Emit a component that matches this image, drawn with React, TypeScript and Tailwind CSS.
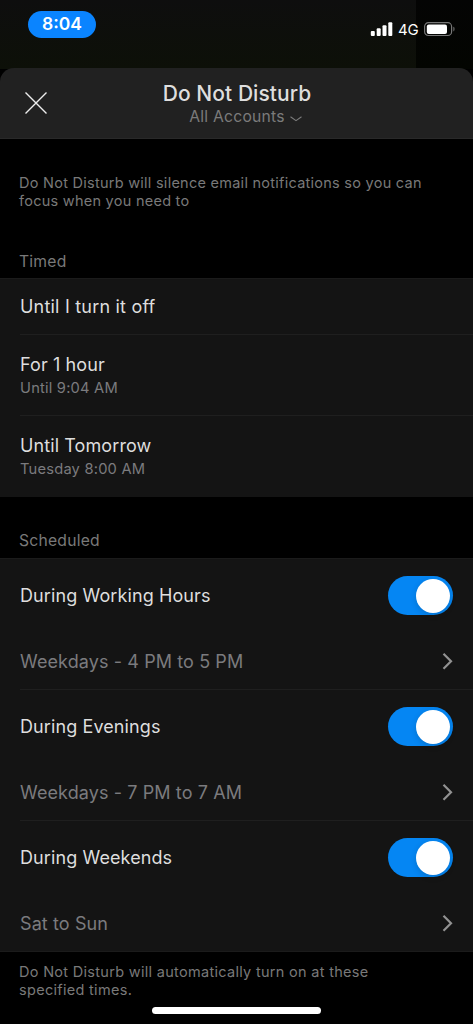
import { useState } from 'react';

const timed = [
  { title: 'Until I turn it off', detail: '' },
  { title: 'For 1 hour', detail: 'Until 9:04 AM' },
  { title: 'Until Tomorrow', detail: 'Tuesday 8:00 AM' },
];

const scheduled = [
  { title: 'During Working Hours', when: 'Weekdays - 4 PM to 5 PM' },
  { title: 'During Evenings', when: 'Weekdays - 7 PM to 7 AM' },
  { title: 'During Weekends', when: 'Sat to Sun' },
];

function StatusBar() {
  return (
    <div className="flex h-[69px] bg-linear-to-b from-[#0e0e0e] to-[#0d1008]">
      <div className="flex-1 pl-7 pt-[11px]">
        <div className="flex h-[27px] w-[68px] items-center justify-center rounded-full bg-[#0a84ff] text-[17.5px] font-semibold text-white">
          8:04
        </div>
      </div>
      <div className="w-[57px] bg-linear-to-b from-[#040404] to-[#030501]" />
      <div className="-ml-[103px] flex w-[103px] items-start pt-[21px]">
        <svg width="24" height="16" viewBox="0 0 24 16" fill="#fff">
          <rect x="0.8" y="10" width="4" height="5" rx="1" />
          <rect x="6.7" y="7.3" width="4" height="7.7" rx="1" />
          <rect x="12.5" y="4.3" width="4" height="10.7" rx="1" />
          <rect x="18.3" y="1.2" width="4" height="13.8" rx="1" />
        </svg>
        <span className="ml-1 w-[21px] text-[15px] leading-[17px] tracking-[-0.1px] text-white">4G</span>
        <svg className="ml-[5px]" width="32" height="16" viewBox="0 0 32 16">
          <rect x="0.6" y="1.7" width="27" height="12.8" rx="3.8" fill="none" stroke="#777" strokeWidth="1.2" />
          <rect x="2.8" y="3.5" width="20.2" height="9.4" rx="2" fill="#fff" />
          <path d="M29.4 5.8c1.5.5 1.5 4.1 0 4.6z" fill="#777" />
        </svg>
      </div>
    </div>
  );
}

function Toggle({ on, onChange }: { on: boolean; onChange: () => void }) {
  return (
    <button
      role="switch"
      aria-checked={on}
      onClick={onChange}
      className={`flex h-[39px] w-[65px] items-center rounded-full px-[3px] transition-colors ${
        on ? 'justify-end bg-[#0586f3]' : 'justify-start bg-[#39393d]'
      }`}
    >
      <span className="size-[34px] rounded-full bg-white shadow-[0_2px_6px_rgba(0,0,0,0.15)]" />
    </button>
  );
}

export default function App() {
  const [enabled, setEnabled] = useState([true, true, true]);

  const toggle = (index: number) => setEnabled(enabled.map((on, i) => (i === index ? !on : on)));

  return (
    <div className="flex h-[1024px] w-[473px] flex-col overflow-hidden bg-black font-['Inter',sans-serif] text-[#dedede]">
      <StatusBar />

      <header className="-mt-px grid h-[71px] shrink-0 grid-cols-[60px_1fr_60px] rounded-t-[14px] border-b border-[#292929] bg-[#212121]">
        <button className="flex items-center pl-[25px]" aria-label="Close">
          <svg width="22" height="22" viewBox="0 0 22 22" fill="none" stroke="#ededed" strokeWidth="1.4">
            <path d="M.5.5l21 21M21.5.5l-21 21" />
          </svg>
        </button>
        <div className="flex flex-col items-center pt-3">
          <h1 className="pl-px text-[21px] leading-7 font-medium tracking-[0.05px] whitespace-nowrap">Do Not Disturb</h1>
          <div className="flex items-center pl-[18px] text-[15.7px] leading-[18px] tracking-[0.22px] text-[#7b7b7b]">
            <span>All Accounts</span>
            <svg className="mt-1 ml-[5px]" width="12" height="6" viewBox="0 0 12 6" fill="none" stroke="#7b7b7b" strokeWidth="1.1">
              <path d="M.5.8L6 4.7 11.5.8" />
            </svg>
          </div>
        </div>
      </header>

      <p className="h-[111px] shrink-0 pt-[35px] pl-[19px] text-[14.5px] leading-[17.5px] tracking-[0.26px] text-[#797979]">
        Do Not Disturb will silence email notifications so you can
        <br />
        focus when you need to
      </p>

      <h2 className="h-[28px] shrink-0 pt-[2px] pl-[19px] text-[15.7px] leading-5 tracking-[0.22px] text-[#797979]">Timed</h2>
      <section className="shrink-0 border-t border-[#1b1b1b] bg-[#141414] pl-5">
        {timed.map((item, i) => (
          <div
            key={item.title}
            className={`flex flex-col justify-center ${item.detail ? 'h-[81px]' : 'h-[56px] pt-px'} ${
              i < timed.length - 1 ? 'border-b border-[#1f1f1f]' : ''
            }`}
          >
            <p className={`text-[18px] ${item.detail ? 'leading-[23px] tracking-[0.1px]' : 'leading-6 tracking-[0.2px]'}`}>
              {item.title}
            </p>
            {item.detail && (
              <p className="-mb-px pt-[2px] text-[14.7px] leading-[21px] tracking-[0.2px] text-[#7b7b7e]">{item.detail}</p>
            )}
          </div>
        ))}
      </section>

      <h2 className="h-[61px] shrink-0 pt-[34px] pl-[19px] text-[15.7px] leading-5 tracking-[0.22px] text-[#797979]">
        Scheduled
      </h2>
      <section className="shrink-0 border-y border-[#1b1b1b] bg-[#141414] pl-5">
        {scheduled.map((item, i) => (
          <div key={item.title} className={i < scheduled.length - 1 ? 'border-b border-[#1f1f1f]' : ''}>
            <div className="flex h-[73px] items-center justify-between pr-5">
              <span className="text-[18px] tracking-[0.1px]">{item.title}</span>
              <Toggle on={enabled[i]} onChange={() => toggle(i)} />
            </div>
            <button className="flex h-[57px] w-full items-center justify-between pr-5 text-[18px] tracking-[0.1px] text-[#7b7b7e]">
              <span className="pt-[2px]">{item.when}</span>
              <svg width="11" height="18" viewBox="0 0 11 18" fill="none" stroke="#929292" strokeWidth="2.2">
                <path d="M1.5 1.8L9 9.3l-7.5 7.5" />
              </svg>
            </button>
          </div>
        ))}
      </section>

      <footer className="flex flex-1 flex-col pl-[19px]">
        <p className="pt-[11px] text-[14.5px] leading-[17.5px] tracking-[0.3px] text-[#797979]">
          Do Not Disturb will automatically turn on at these
          <br />
          specified times.
        </p>
        <div className="mt-[9px] ml-[133px] h-[7px] w-[169px] rounded-full bg-white" />
      </footer>
    </div>
  );
}
